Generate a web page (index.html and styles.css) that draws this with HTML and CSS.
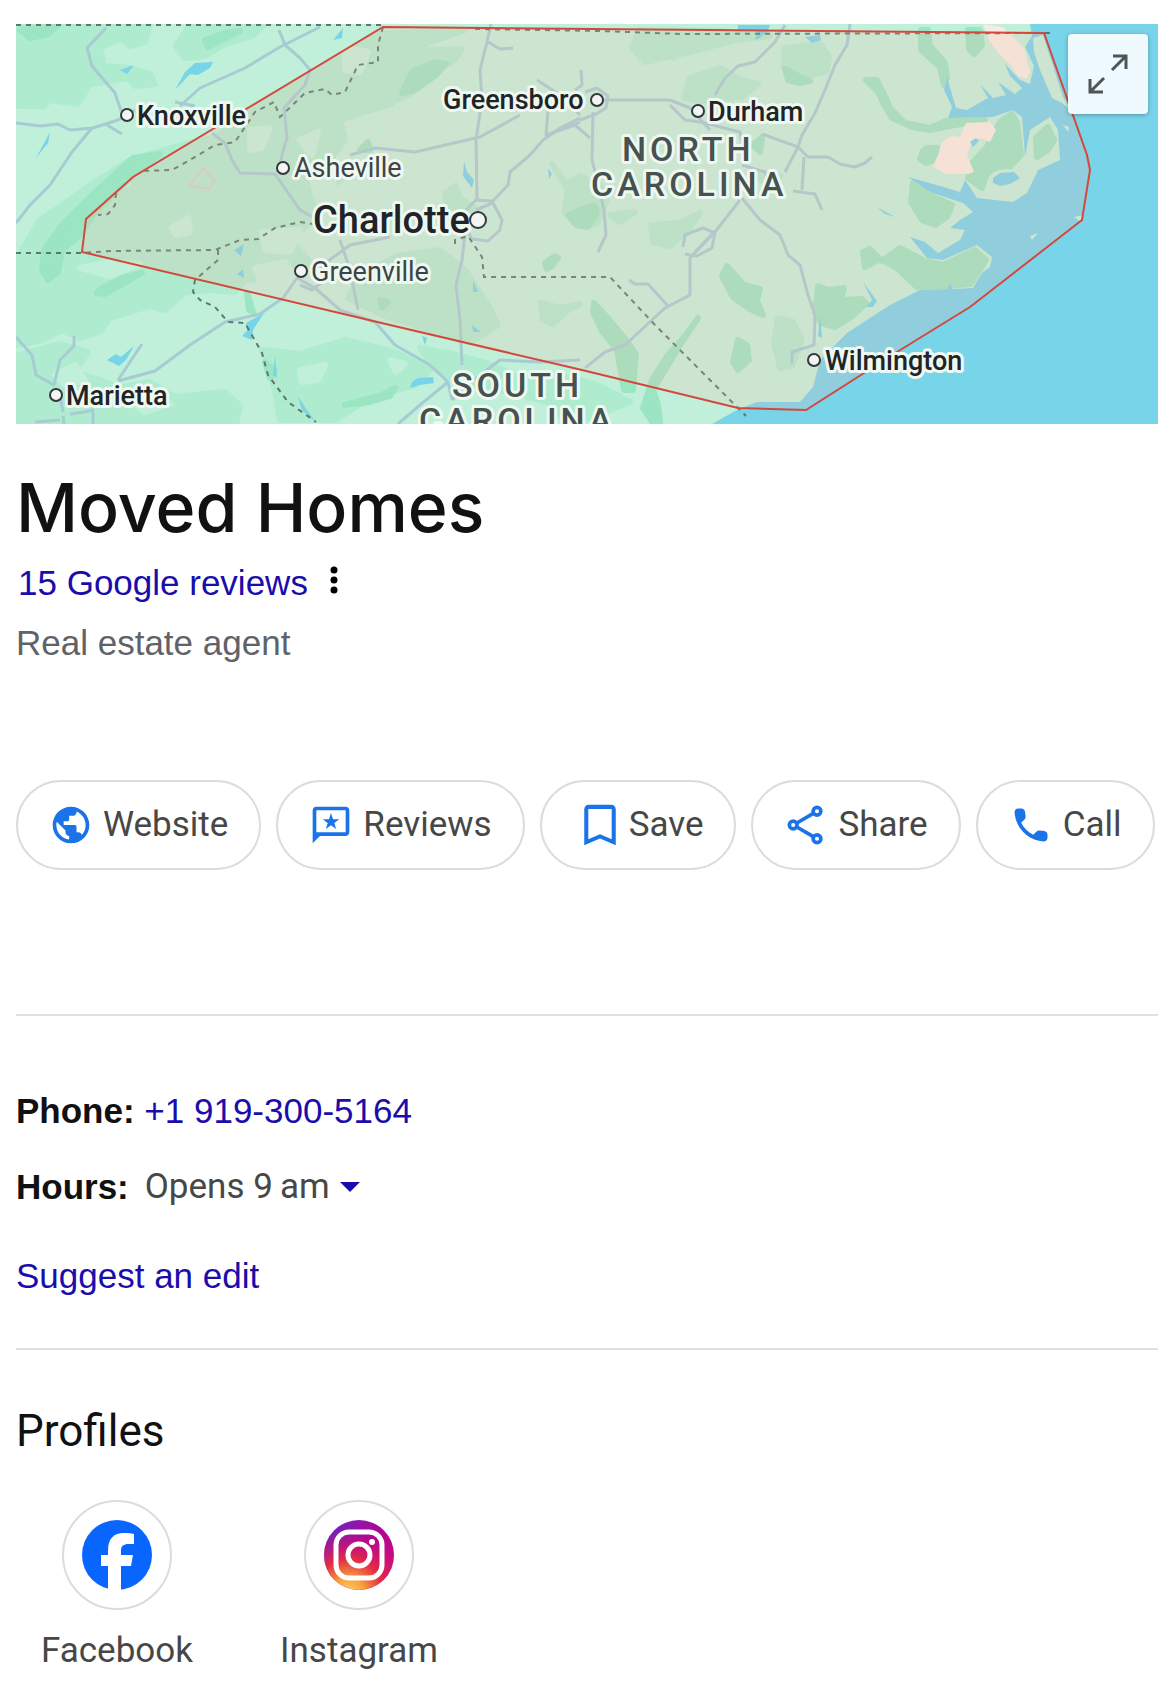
FILE: index.html
```html
<!DOCTYPE html>
<html lang="en">
<head>
  <meta charset="UTF-8" />
  <meta name="viewport" content="width=device-width, initial-scale=1.0" />
  <title>Moved Homes</title>
  <link rel="stylesheet" href="styles.css">
</head>
<body>
  <main class="panel">
    <div class="map">
      <svg class="map-art" viewBox="16 24 1142 400" role="img" aria-label="Service area map of North Carolina">
        <rect class="land" x="16" y="24" width="1142" height="400" />

        <!-- forests -->
        <g class="forest">
          <path d="M16 24H150L145 42 130 46 122 38 100 48 104 66 128 68 150 74 155 84 135 86 128 78 90 84 78 104 50 100 40 110 16 105Z" />
          <path d="M190 24H265L252 36 225 44 205 56 185 58 176 46Z" />
          <path d="M375 34 330 62 282 90 245 115 215 137 175 147 130 160 95 182 64 204 40 220 28 240 16 260V345L40 341 62 330 80 338 100 332 110 318 150 306 165 310 185 292 212 290 235 292 245 280 290 276 310 262 290 240 320 214 310 200 340 180 330 160 345 140 340 120 365 112 392 104 398 70 425 44 465 30Z" />
          <path d="M16 356 60 344 88 352 74 372 100 380 120 388 150 382 175 397 225 392 240 406 236 424H16Z" />
          <path d="M262 350 300 354 345 340 395 352 430 370 415 385 370 398 335 420H280L275 390Z" />
          <path d="M396 256 440 250 465 270 490 308 498 325 475 340 435 332 385 316 348 298 358 278Z" />
          <path d="M396 60 430 50 462 49 455 60 432 73 410 94 398 100Z" />
          <path d="M420 348 452 354 490 364 520 378 555 374 595 384 630 402 585 420H565L548 402 500 390 462 383 436 370Z" />
          <path d="M640 30 720 31 770 36 735 40 690 52 645 62 632 48Z" />
          <path d="M690 78 720 68 742 80 758 84 742 97 700 101 684 98Z" />
          <path d="M552 164 566 184 580 176 601 186 607 200 597 224 580 226 564 212 568 190Z" />
          <path d="M651 225 680 223 700 213 688 230 670 246 653 242Z" />
          <path d="M541 303 560 308 580 304 568 310 553 324 543 320Z" />
          <path d="M784 48 820 44 829 57 826 72 800 77 784 68Z" />
          <path d="M778 318 793 322 802 340 792 366 780 368 774 342Z" />
          <path d="M445 194 455 186 460 198 474 208 460 215 448 207Z" />
          <path d="M610 215 635 212 620 222ZM668 42 682 40 674 58Z" />
          <path d="M750 170 765 178 780 176 768 186Z" />
        </g>

        <!-- clearings -->
        <g class="clearing">
          <path d="M345 48 368 52 360 72 345 70ZM250 130 270 128 262 148 250 150ZM300 140 318 132 312 155Z" />
          <path d="M262 232 300 230 290 252 265 250ZM255 268 285 262 298 282 285 292 262 286Z" />
          <path d="M172 228 188 218 190 232 176 235ZM312 178 335 172 332 192 316 196Z" />
          <path d="M20 112 50 112 46 118 22 116ZM80 268 110 262 140 264 110 276ZM120 180 128 184 118 186Z" />
          <path d="M55 375 75 365 85 380 65 385ZM300 370 325 365 318 380 302 382ZM390 360 405 364 396 372Z" />
          <path d="M130 400 150 396 170 404 145 412ZM360 128 380 124 372 142Z" />
        </g>

        <!-- denser forests -->
        <g class="forest-dark">
          <path d="M133 158 160 154 128 180 95 212 80 235 62 250 58 272 48 280 42 270 44 250 62 225 87 200 112 177Z" />
          <path d="M20 30 58 26 48 34 30 38Z" />
          <path d="M102 288 122 278 142 273 128 281 105 294 97 293Z" />
          <path d="M402 93 412 72 435 62 446 64 436 75 415 90Z" />
          <path d="M594 303 607 317 626 340 636 354 633 390 624 390 617 350 602 331 593 312Z" />
          <path d="M698 318 680 345 664 372 653 390 658 405 660 422H652L643 408 652 380 667 356 686 335Z" />
          <path d="M568 215 585 208 595 206 597 213 588 227 576 225Z" />
          <path d="M545 263 555 256 558 258 552 266 547 269Z" />
          <path d="M727 266 744 285 760 289 757 300 763 315 750 309 733 297 722 276Z" />
          <path d="M738 340 747 345 749 360 738 370 733 362Z" />
          <path d="M785 69 800 77 810 81 800 83 788 80Z" />
          <path d="M866 80 877 80 883 92 890 108 905 123 930 128 946 121 985 120 955 125 930 130 912 127 892 118 883 103 878 92Z" />
          <path d="M921 30 928 30 930 46 945 63 947 78 944 85 940 67 921 50Z" />
          <path d="M968 30H980L982 45 974 54 969 49Z" />
          <path d="M927 148 937 148 935 160 926 163 920 159 923 151Z" />
          <path d="M1000 122 1012 114 1017 122 1021 155 1008 169 985 178 982 188 968 178 973 162 987 147Z" />
          <path d="M913 183 930 195 952 205 947 217 935 225 922 220 911 202Z" />
          <path d="M863 252 870 249 882 261 900 248 925 261 943 265 975 250 986 260 971 284 945 286 917 287 897 268 880 259 865 267Z" />
          <path d="M818 286 828 290 844 288 841 300 862 299 866 303 853 316 835 327 821 323 815 312Z" />
          <path d="M1036 138 1048 127 1054 140 1048 150 1037 157Z" />
          <path d="M205 40 225 33 240 31 228 37 208 47Z" />
          <path d="M753 145 762 137 760 152Z" />
          <path d="M247 293 250 302 253 312 249 310Z" />
          <path d="M345 405 382 395 395 388 390 396 370 402Z" />
          <path d="M360 150 368 142 370 150ZM380 300 388 302 382 308ZM265 362 275 370 270 378Z" />
        </g>

        <!-- ocean, sounds and rivers -->
        <g class="water">
          <path d="M1030 24 1032 36 1025 47 1034 66 1030 84 1020 80 1005 64 1010 76 1022 88 1015 94 998 82 1006 95 993 98 980 84 988 98 967 110 956 108 947 77 944 90 952 107 948 118 993 117 1013 110 1022 117 1025 157 1030 130 1050 117 1058 130 1060 160 1038 170 1027 193 1013 202 977 198 965 180 960 192 940 186 908 177 930 192 963 203 973 212 960 220 950 228 965 230 960 240 938 253 925 242 910 237 927 258 943 260 977 245 992 257 990 267 982 273 973 288 953 289 950 283 947 289 920 290 890 305 847 333 820 360 813 387 800 402 757 402 737 410 712 424H1158V24Z" />
          <path d="M175 90 185 72 195 63 213 62 210 68 198 75 190 74Z" />
          <path d="M120 70 134 65 127 74Z" />
          <path d="M36 158 50 132 48 143Z" />
          <path d="M107 360 116 354 121 357 134 346 126 360 119 366Z" />
          <path d="M333 40 343 28 342 38Z" />
          <path d="M246 323 264 313 253 330 252 340 242 336 247 331Z" />
          <path d="M234 250 244 244 241 256ZM237 274 243 269 244 278Z" />
          <path d="M273 375 275 356 277 378ZM298 396 306 409 316 422 302 410Z" />
          <path d="M412 382 418 378 433 377 434 383 420 385 410 388Z" />
          <path d="M464 161 467 172 474 180 472 188 463 176ZM548 168 552 174 549 179ZM473 280 478 292 473 292ZM472 325 481 332 473 332ZM422 336 427 338 425 345Z" />
          <path d="M738 25H770L768 30 760 38 755 40 758 30 738 30Z" />
          <path d="M805 37 820 35 821 40 812 43Z" />
          <path d="M863 282 877 301 873 307 866 307 872 300Z" />
          <path d="M820 315 822 338 818 336Z" />
          <path d="M877 207 895 217 885 214Z" />
        </g>

        <!-- outer banks and lake shore -->
        <path class="land" d="M1033 38 1043 35 1063 97 1074 113 1062 103 1052 98 1040 70 1034 52Z" />
        <path class="land" d="M1063 125 1069 127 1068 132ZM1074 217 1084 215 1080 221ZM1030 236 1038 233 1032 240Z" />
        <ellipse class="land" cx="1007" cy="181" rx="19" ry="12" />
        <path class="water" d="M993 178 1000 173 1014 172 1020 178 1010 184 1000 186 993 183Z" />

        <!-- bare ground -->
        <path class="sand" d="M983 24 1003 27 1024 48 1030 72 1027 79 1018 76 1010 64 1000 55 990 42Z" />
        <path class="sand" d="M966 123 990 122 996 130 990 142 980 138 972 142 967 155 974 172 968 174 945 174 933 166 938 155 942 142 952 136 960 137Z" />
        <path class="water" d="M970 142 976 138 979 141 973 147Z" />
        <path class="park" d="M189 186 203 168 215 181 209 189Z" />

        <g class="roads">
          <path d="M106 28 87 48 92 66 115 93 121 111" />
          <path d="M16 123 40 126 58 124 70 130 93 128 118 120 135 110" />
          <path d="M16 223 30 205 50 185 72 152 92 128M107 125 122 134" />
          <path d="M180 106 200 88 245 68 280 47 320 27" />
          <path d="M279 30 285 45 300 58 310 70 305 85 284 108 287 138 282 155 279 170M212 133 225 143 232 160 240 173 275 174 300 210 320 221" />
          <path d="M175 102 195 106M16 337 32 355 36 375 54 385 60 360 74 346 74 336M63 416 64 424M70 414 84 412 93 410V424M63 412 60 395M35 422 60 420" />
          <path d="M118 380 142 344M118 381 155 371 190 345 225 322 260 314 283 298 297 278 315 288 340 310 375 322 395 345 430 365 448 382 452 400M320 267 350 245 390 237M340 240 350 270 358 310M300 285 312 290 325 280" />
          <path d="M448 382 420 405 398 424M452 400 480 375 500 360 540 362 580 360" />
          <path d="M350 155 375 148 415 152 480 137 520 115M491 24 487 42 480 70 482 100 476 140 477 200M488 42 500 49 513 48M537 80 560 95 580 115M581 70 582 85 575 90" />
          <path d="M597 100 670 100 690 108 710 130M593 112 592 160 597 180 604 210 606 235 598 252" />
          <path d="M580 118 560 128 543 140 530 155 510 172 508 185 490 204 476 210M548 110 546 135 575 125 590 138M543 140 555 132 580 122" />
          <path d="M585 92 597 88 608 96 606 108 596 114 580 120" />
          <path d="M466 210 476 200 492 201 502 220 500 230 488 241 472 239 464 225M466 225 462 260 456 285 460 320 462 365" />
          <path d="M715 95 725 78 738 66 755 62 775 42 785 25M670 105 685 120 700 122 740 132 742 145M850 24 847 45 835 65 825 90 815 113 802 135 798 147 785 172M762 134 798 147 808 157 828 157 840 164 855 167 865 163 872 157" />
          <path d="M804 157 802 190M793 191 815 194 822 210M742 165 765 172 770 185M740 200 715 232 690 258 690 295 665 308 625 345 605 352 585 368M742 198 760 220 780 235 788 255 800 265 808 295 815 315 814 345 792 352V364" />
          <path d="M683 247 685 235 703 228 715 233 712 248 697 256 685 254M668 306 648 284 635 284 629 280M695 252 712 234" />
        </g>

        <g class="borders">
          <path d="M16 25H383" />
          <path d="M383 27 378 45 378 62 358 65 345 92 332 95 325 89 305 93 280 117 274 102 255 112 235 142 215 145 190 160 172 170 140 171M116 193 115 205 108 214 98 215" />
          <path d="M16 253H82L110 251 215 250 240 240 258 239 275 228 300 222 320 225M218 250 218 260 195 280 193 292 200 300 215 307 228 322 245 323 262 353 268 375 288 402 316 422" />
          <path d="M455 244 455 240 468 236 482 257 484 277 610 277 655 325 738 408 746 416" />
          <path d="M475 29 600 31 680 34 1050 33" />
        </g>

        <path class="area" d="M383 27 1044 33 1087 155 1090 170 1082 220 970 307 897 352 806 410 738 408 582 370 390 325 82 252 86 219 133 177Z" />

        <g class="states">
          <text x="622" y="161">NORTH</text>
          <text x="591" y="196">CAROLINA</text>
          <text x="452" y="397">SOUTH</text>
          <text x="419" y="432">CAROLINA</text>
        </g>
        <g class="cities">
          <text x="137" y="125">Knoxville</text>
          <text x="443" y="109">Greensboro</text>
          <text x="708" y="121">Durham</text>
          <text x="66" y="405">Marietta</text>
          <text x="825" y="370">Wilmington</text>
          <text class="city-minor" x="294" y="177">Asheville</text>
          <text class="city-minor" x="311" y="281">Greenville</text>
          <text class="city-major" x="313" y="233">Charlotte</text>
        </g>
        <g class="dots">
          <circle cx="127" cy="115" r="6" />
          <circle cx="597" cy="100" r="6" />
          <circle cx="698" cy="111" r="6" />
          <circle cx="56" cy="395" r="6" />
          <circle cx="814" cy="360" r="6" />
          <circle cx="283" cy="168" r="6" />
          <circle cx="301" cy="271" r="6" />
          <circle cx="478" cy="220" r="8" />
        </g>
      </svg>
      <button class="map-expand" type="button" aria-label="Expand map">
        <svg viewBox="0 0 40 40" width="40" height="40">
          <path d="M24 16 38 2M25 2H38V15M16 24 2 38M2 25V38H15" />
        </svg>
      </button>
    </div>

    <header class="heading">
      <h1>Moved Homes</h1>
      <div class="reviews-row">
        <a href="#">15 Google reviews</a>
        <button class="more" type="button" aria-label="More options">
          <svg viewBox="0 0 8 28" width="8" height="28">
            <circle cx="4" cy="4" r="3.500" />
            <circle cx="4" cy="14" r="3.500" />
            <circle cx="4" cy="24" r="3.500" />
          </svg>
        </button>
      </div>
      <p class="category">Real estate agent</p>
    </header>

    <nav class="actions">
      <a class="action" href="#">
        <svg class="icon" viewBox="0 0 24 24"><path d="M12 2C6.480 2 2 6.480 2 12s4.480 10 10 10 10-4.480 10-10S17.520 2 12 2zm-1 17.930c-3.950-.490-7-3.850-7-7.930 0-.620.080-1.210.210-1.790L9 15v1c0 1.100.900 2 2 2v1.930zm6.900-2.540c-.260-.810-1-1.390-1.900-1.390h-1v-3c0-.550-.450-1-1-1H8v-2h2c.550 0 1-.450 1-1V7h2c1.100 0 2-.900 2-2v-.410c2.930 1.190 5 4.060 5 7.410 0 2.080-.800 3.970-2.100 5.390z" /></svg>
        <span>Website</span>
      </a>
      <button class="action" type="button">
        <svg class="icon" viewBox="0 0 24 24">
          <path d="M20 2H4c-1.100 0-2 .900-2 2v18l4-4h14c1.100 0 2-.900 2-2V4c0-1.100-.900-2-2-2zm0 14H4V4h16v12z" />
          <path d="M12 5.500l1.100 3.300h3.400l-2.700 2.100 1 3.300-2.800-2-2.800 2 1-3.300-2.700-2.100h3.400z" />
        </svg>
        <span>Reviews</span>
      </button>
      <button class="action action-save" type="button">
        <svg class="icon" viewBox="0 0 24 24"><path d="M17 3H7c-1.100 0-2 .900-2 2v16l7-3 7 3V5c0-1.100-.900-2-2-2zm.200 15.300l-5.200-2.200-5.200 2.200V4.900h10.400z" /></svg>
        <span>Save</span>
      </button>
      <button class="action" type="button">
        <svg class="icon icon-line" viewBox="0 0 24 24">
          <circle cx="18" cy="4.500" r="2.100" />
          <circle cx="5" cy="12" r="2.100" />
          <circle cx="18" cy="19.500" r="2.100" />
          <path d="M7 10.900 16 5.700M7 13.100 16 18.300" />
        </svg>
        <span>Share</span>
      </button>
      <a class="action" href="#">
        <svg class="icon" viewBox="0 0 24 24"><path d="M19.230 15.260l-2.540-.290c-.610-.070-1.210.140-1.640.570l-1.840 1.840c-2.830-1.440-5.150-3.750-6.590-6.590l1.850-1.850c.430-.430.640-1.030.570-1.640l-.290-2.520c-.120-1.010-.970-1.770-1.990-1.770H5.030c-1.130 0-2.070.940-2 2.070.530 8.540 7.360 15.360 15.890 15.890 1.130.070 2.070-.870 2.070-2v-1.730c.010-1.010-.750-1.860-1.760-1.980z" /></svg>
        <span>Call</span>
      </a>
    </nav>

    <section class="details">
      <p><b>Phone:</b> <a href="#">+1 919-300-5164</a></p>
      <div class="hours">
        <b>Hours:</b>
        <button class="hours-toggle" type="button">
          Opens 9&thinsp;am
          <svg viewBox="0 0 20 10" width="20" height="10"><path d="M0 0H20L10 10Z" /></svg>
        </button>
      </div>
      <a class="suggest" href="#">Suggest an edit</a>
    </section>

    <section class="profiles">
      <h2>Profiles</h2>
      <div class="profile-list">
        <a class="profile" href="#">
          <span class="profile-logo">
            <svg viewBox="0 0 70 70" width="70" height="70">
              <circle cx="35" cy="35" r="35" fill="#0866ff" />
              <path fill="#fff" d="M26 70V46H19V35H26V31C26 18 32 13 42 13 46 13 49 13 52 14V24H47C41 24 39 26 39 31V35H51L49 46H39V70Z" />
            </svg>
          </span>
          <span>Facebook</span>
        </a>
        <a class="profile" href="#">
          <span class="profile-logo">
            <svg viewBox="0 0 70 70" width="70" height="70">
              <defs>
                <linearGradient id="insta-base" x1="0" y1="0" x2="1" y2="1">
                  <stop offset="0" stop-color="#5a32c8" />
                  <stop offset="0.400" stop-color="#a8089c" />
                  <stop offset="1" stop-color="#d80a70" />
                </linearGradient>
                <radialGradient id="insta-glow" cx="0.350" cy="1.050" r="0.900">
                  <stop offset="0" stop-color="#ffd36b" />
                  <stop offset="0.250" stop-color="#f9a13c" />
                  <stop offset="0.550" stop-color="#e8303c" stop-opacity="0.900" />
                  <stop offset="1" stop-color="#d0106c" stop-opacity="0" />
                </radialGradient>
              </defs>
              <circle cx="35" cy="35" r="35" fill="url(#insta-base)" />
              <circle cx="35" cy="35" r="35" fill="url(#insta-glow)" />
              <g fill="none" stroke="#fff" stroke-width="5">
                <rect x="12" y="12" width="46" height="46" rx="13" />
                <circle cx="35" cy="35" r="11" />
              </g>
              <circle cx="48" cy="22" r="3" fill="#fff" />
            </svg>
          </span>
          <span>Instagram</span>
        </a>
      </div>
    </section>
  </main>
</body>
</html>
```
FILE: styles.css
```css
* {
  box-sizing: border-box;
}

body {
  margin: 0;
  background-color: #fff;
  color: #111;
  font-family: "Liberation Sans", Arial, sans-serif;
  font-size: 35px;
  line-height: 44px;
}

a {
  color: #1a0dab;
  text-decoration: none;
}

button {
  padding: 0;
  border: none;
  background: none;
  font: inherit;
  cursor: pointer;
}

h1,
h2,
p {
  margin: 0;
}

.panel {
  padding: 24px 14px 22px 16px;
}

/* map */
.map {
  position: relative;
}

.map-art {
  display: block;
  width: 100%;
  height: auto;
}

.land,
.clearing {
  fill: #c0f0da;
}

.forest {
  fill: #aeebcf;
  stroke: #aeebcf;
}

.clearing {
  stroke: #c0f0da;
}

.forest-dark {
  fill: #9be5c2;
  stroke: #9be5c2;
}

/* same-colour strokes round off the corners of the patches */
.forest,
.clearing,
.forest-dark {
  stroke-width: 6;
  stroke-linejoin: round;
}

.water {
  fill: #78d4e9;
}

.sand {
  fill: #f5ebe2;
}

.park {
  fill: none;
  stroke: #d5cfc5;
  stroke-width: 2;
}

.roads {
  fill: none;
  stroke: #a6cbd2;
  stroke-width: 3;
  stroke-linejoin: round;
}

.borders {
  fill: none;
  stroke: #5c7a6c;
  stroke-width: 2;
  stroke-dasharray: 5 5;
}

.area {
  fill: rgba(255, 185, 165, 0.18);
  stroke: #d3483d;
  stroke-width: 2;
}

.states,
.cities {
  font-family: Roboto, sans-serif;
  font-weight: 500;
  stroke: #eef8f1;
  stroke-width: 6;
  stroke-linejoin: round;
  paint-order: stroke;
}

.states {
  font-size: 34px;
  letter-spacing: 4px;
  fill: #46524f;
}

.cities {
  font-size: 27px;
  fill: #202426;
}

.city-minor {
  font-weight: 400;
  fill: #3c4446;
}

.city-major {
  font-size: 38px;
}

.dots {
  fill: #f2f5f4;
  stroke: #33393b;
  stroke-width: 2;
}

.map-expand {
  position: absolute;
  top: 10px;
  right: 10px;
  display: flex;
  align-items: center;
  justify-content: center;
  width: 80px;
  height: 80px;
  border-radius: 4px;
  background-color: #eefafd;
  box-shadow: 0 1px 4px rgba(0, 0, 0, 0.3);
}

.map-expand svg {
  fill: none;
  stroke: #4d5558;
  stroke-width: 3;
}

/* name and category */
.heading {
  margin-top: 43px;
}

h1 {
  font-family: Inter, sans-serif;
  font-size: 68px;
  font-weight: 500;
  line-height: 80px;
}

.reviews-row {
  display: flex;
  align-items: center;
  gap: 22px;
  margin-top: 14px;
  padding-left: 2px;
}

.more {
  display: flex;
  padding-bottom: 6px;
}

.category {
  margin-top: 16px;
  color: #5f6368;
}

/* action pills */
.actions {
  display: flex;
  flex-wrap: wrap;
  gap: 15px;
  margin-top: 115px;
}

.action {
  display: flex;
  align-items: center;
  gap: 10px;
  height: 90px;
  padding: 0 31px;
  border: 2px solid #dadce0;
  border-radius: 45px;
  color: #474747;
  font-family: Roboto, sans-serif;
}

.icon {
  width: 44px;
  height: 44px;
  fill: #1a73e8;
}

.icon-line {
  fill: none;
  stroke: #1a73e8;
  stroke-width: 2;
}

.action-save {
  gap: 2px;
}

.action-save .icon {
  width: 54px;
  height: 54px;
}

/* details */
.details {
  display: flex;
  flex-direction: column;
  align-items: flex-start;
  margin-top: 144px;
  padding: 73px 0 50px;
  border-top: 2px solid #dfe1e5;
  border-bottom: 2px solid #dfe1e5;
}

.hours {
  display: flex;
  gap: 16px;
  margin-top: 32px;
}

.hours-toggle {
  display: flex;
  align-items: center;
  gap: 10px;
  color: #474747;
  font-family: Roboto, sans-serif;
}

.hours-toggle svg {
  fill: #1a0dab;
}

.suggest {
  margin-top: 45px;
}

/* profiles */
.profiles {
  margin-top: 55px;
}

h2 {
  font-family: Roboto, sans-serif;
  font-size: 44px;
  font-weight: 400;
  line-height: 52px;
}

.profile-list {
  display: flex;
  flex-wrap: wrap;
  gap: 40px;
  margin-top: 43px;
}

.profile {
  display: flex;
  flex-direction: column;
  align-items: center;
  gap: 19px;
  width: 202px;
  color: #474747;
  font-family: Roboto, sans-serif;
}

.profile-logo {
  display: flex;
  align-items: center;
  justify-content: center;
  width: 110px;
  height: 110px;
  border: 2px solid #dadce0;
  border-radius: 50%;
}

@media (max-width: 700px) {
  .actions {
    margin-top: 48px;
  }

  .details {
    margin-top: 48px;
    padding: 40px 0;
  }
}
```
